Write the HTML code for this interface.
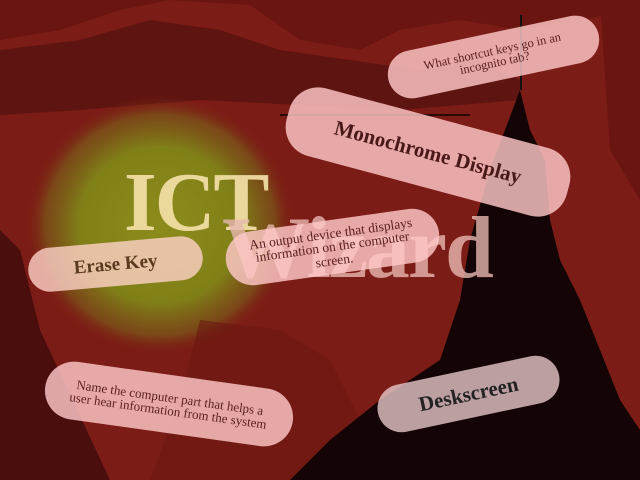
<!DOCTYPE html><html><head><style>
body{margin:0;width:640px;height:480px;overflow:hidden;background:#7c1c16;position:relative;font-family:"Liberation Serif",serif}
.p{position:absolute;background:rgba(255,200,200,.82);border-radius:30px;display:flex;align-items:center;justify-content:center;text-align:center;color:#5a2020;line-height:1}
</style></head><body>
<svg width="640" height="480" style="position:absolute;left:0;top:0">
<defs><radialGradient id="g" cx="50%" cy="50%" r="50%"><stop offset="0" stop-color="#8c8c1c"/><stop offset=".6" stop-color="#808018"/><stop offset=".85" stop-color="#7a5a18" stop-opacity=".7"/><stop offset="1" stop-color="#7c1c16" stop-opacity="0"/></radialGradient></defs>
<path d="M0 40 L60 30 L120 10 L170 0 L250 5 L300 40 L360 50 L400 30 L460 20 L520 30 L640 10 L640 0 L0 0Z" fill="#6a1510"/>
<path d="M0 50 L80 40 L150 20 L220 30 L280 50 L350 60 L420 70 L480 60 L520 80 L520 100 L400 110 L200 100 L80 110 L0 115Z" fill="#5e1410"/>
<ellipse cx="160" cy="225" rx="135" ry="130" fill="url(#g)"/>
<path d="M0 230 L20 250 L40 330 L110 480 L0 480Z" fill="#4a0e0c"/>
<path d="M200 320 L280 330 L330 360 L360 420 L340 480 L150 480 L180 400Z" fill="#6a1810" opacity=".6"/>
<path d="M520 90 L530 130 L545 160 L550 220 L560 260 L580 300 L600 350 L620 400 L640 430 L640 480 L290 480 L330 440 L380 400 L440 360 L460 300 L470 240 L490 170 L505 130Z" fill="#140405"/>
<path d="M600 0 L640 0 L640 200 L610 150Z" fill="#6a1510"/>
<line x1="521" y1="15" x2="521" y2="90" stroke="#111" stroke-width="2"/>
<line x1="280" y1="115" x2="470" y2="115" stroke="#2a0a08" stroke-width="2"/>
</svg>
<div style="position:absolute;left:124px;top:154px;font-size:84px;font-weight:bold;color:#f4e0a8;opacity:.92;letter-spacing:-2px">ICT</div>
<div style="position:absolute;left:222px;top:198px;font-size:88px;font-weight:bold;color:#e8b8b0;opacity:.8;letter-spacing:-2px">Wizard</div>
<div class="p" style="left:386px;top:33px;width:215px;height:48px;transform:rotate(-12deg);font-size:12.5px">What shortcut keys go in an<br>incognito tab?</div>
<div class="p" style="left:283px;top:117px;width:290px;height:70px;transform:rotate(15deg);font-size:21px;font-weight:bold;color:#4a1818">Monochrome Display</div>
<div class="p" style="left:28px;top:242px;width:175px;height:44px;transform:rotate(-5deg);font-size:19px;font-weight:bold;color:#5a3a20;background:rgba(255,210,200,.8)">Erase Key</div>
<div class="p" style="left:225px;top:220px;width:215px;height:54px;transform:rotate(-8deg);font-size:13.5px">An output device that displays<br>information on the computer<br>screen.</div>
<div class="p" style="left:44px;top:375px;width:250px;height:58px;transform:rotate(8deg);font-size:13px">Name the computer part that helps a<br>user hear information from the system</div>
<div class="p" style="left:376px;top:370px;width:185px;height:48px;transform:rotate(-12deg);font-size:21px;font-weight:bold;color:#222;background:rgba(230,200,200,.8)">Deskscreen</div>
</body></html>
